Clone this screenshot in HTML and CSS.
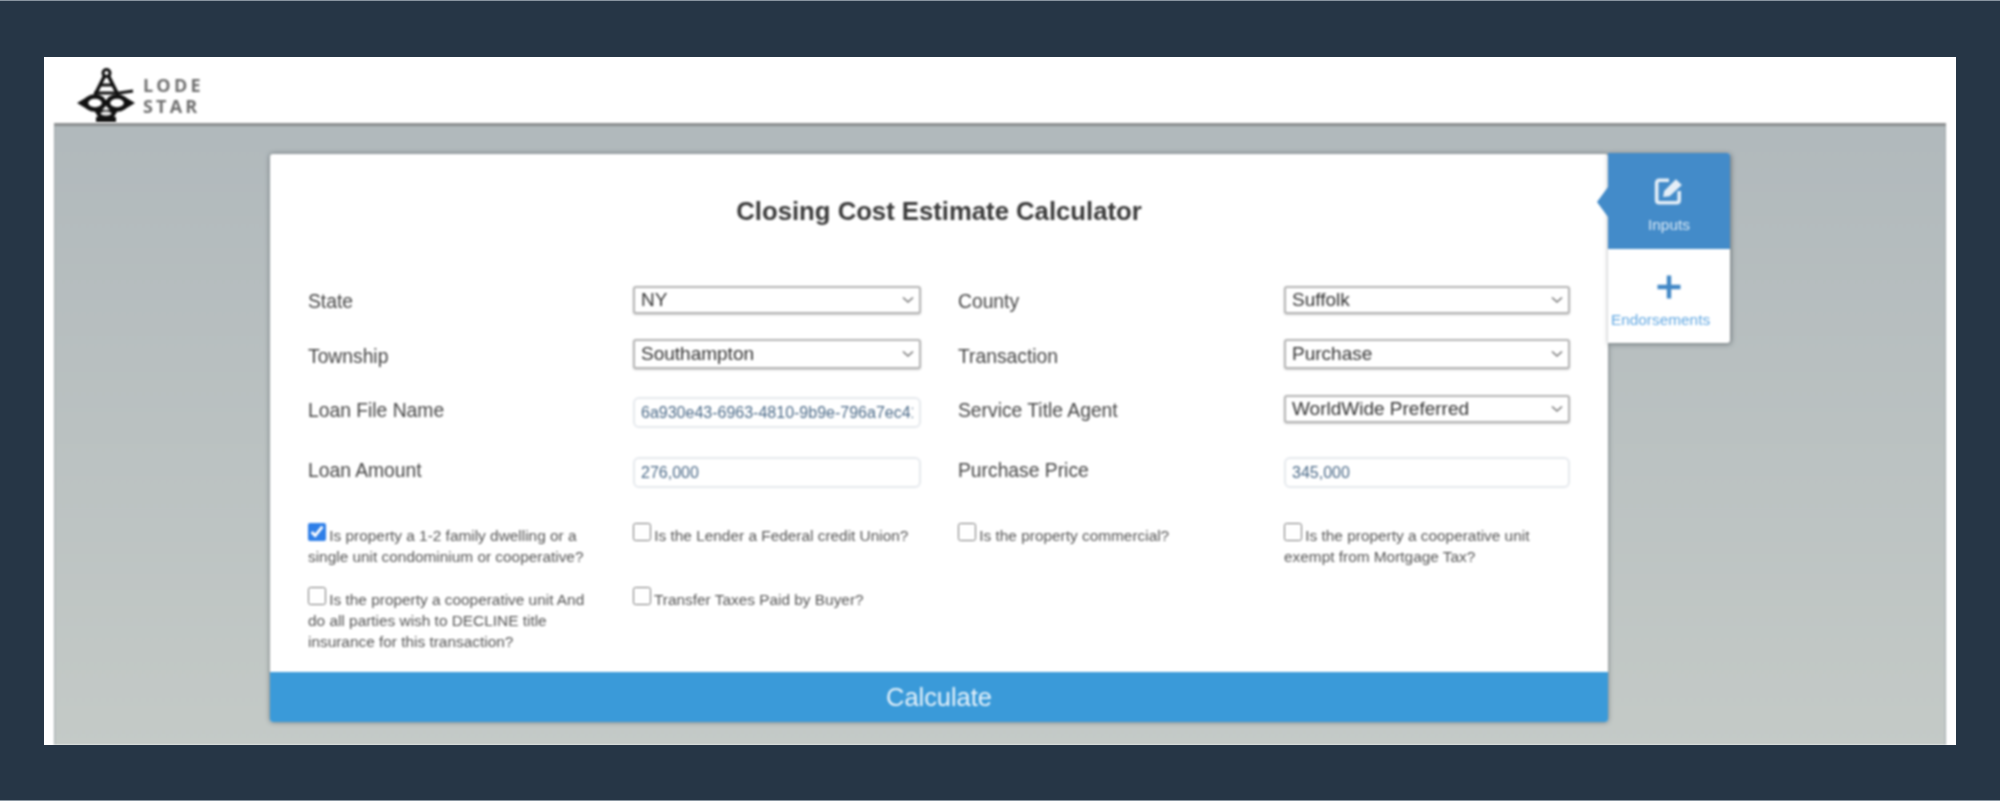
FILE: index.html
```html
<!DOCTYPE html>
<html lang="en">
<head>
<meta charset="utf-8">
<title>Closing Cost Estimate Calculator</title>
<link rel="stylesheet" href="styles.css">
</head>
<body>
<div class="frame">
  <header class="topbar">
    <svg class="logo-mark" viewBox="0 0 58 54" aria-hidden="true">
      <g fill="none" stroke="#111">
        <circle cx="29.5" cy="5" r="3.5" stroke-width="3"/>
        <path d="M27.5 8 L18 27 M31.5 8 L41 27" stroke-width="3.6"/>
        <path d="M23 17 H36 M17 25 H42 L56 23" stroke-width="2.8"/>
        <ellipse cx="18" cy="35" rx="9" ry="6.5" fill="#fff" stroke-width="4.4"/>
        <ellipse cx="40" cy="35" rx="9" ry="6.5" fill="#fff" stroke-width="4.4"/>
      </g>
      <path fill="#111" d="M0 35 L10 29 V41 Z M58 35 L48 29 V41 Z M26 32 H32 V38 H26 Z"/>
      <path fill="#111" d="M17 42 H41 L37 49 H39 V54 H19 V49 H21 Z"/>
      <ellipse cx="29" cy="45.5" rx="5.5" ry="2.2" fill="#e4e4e4"/>
    </svg>
    <div class="logo-text"><span>LODE</span><span>STAR</span></div>
  </header>
  <main class="stage">
    <section class="card">
      <h1 class="title">Closing Cost Estimate Calculator</h1>
      <form class="form">
        <label class="lbl r1">State</label>
        <div class="cell"><select class="sel"><option>NY</option></select></div>
        <label class="lbl r1">County</label>
        <div class="cell end"><select class="sel"><option>Suffolk</option></select></div>

        <label class="lbl r2">Township</label>
        <div class="cell"><select class="sel tall"><option>Southampton</option></select></div>
        <label class="lbl r2">Transaction</label>
        <div class="cell end"><select class="sel tall"><option>Purchase</option></select></div>

        <label class="lbl r3">Loan File Name</label>
        <div class="cell"><input class="inp low" type="text" value="6a930e43-6963-4810-9b9e-796a7ec41a2c"></div>
        <label class="lbl r3">Service Title Agent</label>
        <div class="cell end"><select class="sel"><option>WorldWide Preferred</option></select></div>

        <label class="lbl r4">Loan Amount</label>
        <div class="cell"><input class="inp" type="text" value="276,000"></div>
        <label class="lbl r4">Purchase Price</label>
        <div class="cell end"><input class="inp" type="text" value="345,000"></div>

        <label class="chk"><input type="checkbox" checked> Is property a 1-2 family dwelling or a single unit condominium or cooperative?</label>
        <label class="chk"><input type="checkbox"> Is the Lender a Federal credit Union?</label>
        <label class="chk"><input type="checkbox"> Is the property commercial?</label>
        <label class="chk end"><input type="checkbox"> Is the property a cooperative unit exempt from Mortgage Tax?</label>

        <label class="chk"><input type="checkbox"> Is the property a cooperative unit And do all parties wish to DECLINE title insurance for this transaction?</label>
        <label class="chk"><input type="checkbox"> Transfer Taxes Paid by Buyer?</label>
      </form>
      <button class="calc" type="button">Calculate</button>
    </section>
    <nav class="tabs">
      <div class="tab active">
        <svg class="tab-icon" viewBox="0 0 28 28" aria-hidden="true">
          <path d="M14 4 H5 Q2.5 4 2.5 6.500 V22.500 Q2.500 25 5 25 H21 Q23.500 25 23.500 22.500 V14" fill="none" stroke="#e4eef7" stroke-width="3.400"/>
          <path d="M8.500 19.500 L9.500 14 L20.500 3 L26 8.500 L14.500 19 Z" fill="#e4eef7"/>
        </svg>
        <span class="tab-label">Inputs</span>
      </div>
      <div class="tab">
        <svg class="tab-icon" viewBox="0 0 28 28" aria-hidden="true">
          <path d="M14 2.500 V25.500 M2.500 14 H25.500" fill="none" stroke="#4388c6" stroke-width="4.400"/>
        </svg>
        <span class="tab-label shifted">Endorsements</span>
      </div>
    </nav>
  </main>
</div>
</body>
</html>
```
FILE: styles.css
```css
* { box-sizing: border-box; }
html, body { margin: 0; height: 801px; overflow: hidden; }
body {
  background: #263646;
  border-top: 1px solid #8a96a1;
  border-bottom: 1px solid #8a96a1;
  font-family: "Liberation Sans", Arial, sans-serif;
  padding: 56px 44px 0;
}
.frame {
  width: 1912px;
  height: 688px;
  background: #fff;
  overflow: hidden;
}
.topbar {
  height: 66px;
  padding: 11px 0 0 33px;
  display: flex;
  gap: 8px;
  filter: blur(0.9px);
}
.logo-mark { width: 58px; height: 54px; flex: none; }
.logo-text {
  display: flex;
  flex-direction: column;
  margin-top: 7px;
  font-family: "Open Sans", sans-serif;
  font-weight: 700;
  font-size: 18px;
  line-height: 21px;
  letter-spacing: 3.2px;
  color: #6f6f6f;
}
.stage {
  margin: 0 10px;
  height: 622px;
  border-top: 3px solid #8c8f90;
  padding: 28px 0 0 216px;
  background: linear-gradient(#b1b9bc, #c4cac7);
  box-shadow: inset 1px 0 1px #a2aaad, inset -1px 0 1px #a2aaad;
  display: flex;
  align-items: flex-start;
  filter: blur(0.9px);
}
.card {
  width: 1338px;
  height: 568px;
  background: #fff;
  border-radius: 3px;
  box-shadow: 0 0 5px rgba(70, 80, 85, .7);
  display: flex;
  flex-direction: column;
}
.title {
  margin: 0;
  height: 132px;
  padding-top: 41px;
  text-align: center;
  font-size: 25.700px;
  line-height: 32px;
  font-weight: 700;
  color: #3a3a3a;
}
.form {
  flex: 1;
  display: grid;
  grid-template-columns: 325px 325px 326px 286px;
  grid-template-rows: 53px 56px 62px 66px 64px 1fr;
  padding-left: 38px;
}
.lbl {
  font-size: 19.300px;
  line-height: 24px;
  color: #444;
}
.lbl.r1 { padding-top: 4px; }
.lbl.r2 { padding-top: 6px; }
.lbl.r3 { padding-top: 4px; }
.lbl.r4 { padding-top: 2px; }
.cell { padding-right: 37px; }
.cell.end { padding-right: 0; }
.sel {
  appearance: none;
  display: block;
  width: 100%;
  height: 28px;
  border: 2px solid #b4b4b4;
  border-radius: 3px;
  padding: 0 20px 0 6px;
  font: 19px/22px "Liberation Sans", Arial, sans-serif;
  color: #333;
  background: #fff url("data:image/svg+xml,%3Csvg xmlns='http://www.w3.org/2000/svg' width='12' height='8'%3E%3Cpath d='M1 1.5 L6 6 L11 1.5' fill='none' stroke='%23777' stroke-width='1.6'/%3E%3C/svg%3E") no-repeat right 5px center;
  box-shadow: 0 1px 2px rgba(0, 0, 0, .2);
}
.sel.tall { height: 30px; }
.inp {
  display: block;
  width: 100%;
  height: 31px;
  border: 2px solid #e5e9ed;
  border-radius: 6px;
  padding: 0 6px;
  font: 16px "Liberation Sans", Arial, sans-serif;
  color: #4b6a88;
  background: #fff;
}
.inp.low { margin-top: 2px; }
.chk {
  font-size: 15.400px;
  line-height: 21px;
  color: #555;
  padding-right: 34px;
}
.chk.end { padding-right: 0; }
.chk input {
  margin: 0 -1px 0 0;
  width: 18px;
  height: 18px;
  vertical-align: 0;
  accent-color: #2f7fe8;
}
.calc {
  height: 50px;
  flex: none;
  border: 0;
  border-radius: 0 0 3px 3px;
  background: #3a9ad9;
  color: #e8f3fb;
  font: 25.400px "Liberation Sans", Arial, sans-serif;
}
.tabs {
  width: 122px;
  height: 190px;
  margin-top: -1px;
  border-radius: 0 3px 3px 0;
  box-shadow: 1px 1px 5px rgba(70, 80, 85, .7);
  background: #fff;
  display: flex;
  flex-direction: column;
}
.tab {
  height: 94px;
  display: flex;
  flex-direction: column;
  align-items: center;
  padding-top: 24px;
  font-size: 15.400px;
  line-height: 16px;
  color: #62a8e2;
}
.tab-label { margin-top: 11px; white-space: nowrap; }
.tab-label.shifted { margin-right: 17px; }
.tab-icon { width: 28px; height: 28px; flex: none; }
.tab.active {
  position: relative;
  height: 96px;
  padding-top: 23px;
  background: #438bc9;
  color: #d8e8f5;
  border-radius: 0 3px 0 0;
}
.tab.active .tab-icon { width: 30px; height: 30px; }
.tab.active .tab-label { margin-top: 11px; }
.tab.active::before {
  content: "";
  position: absolute;
  left: -11px;
  top: 34px;
  border-style: solid;
  border-width: 15px 11px 15px 0;
  border-color: transparent #438bc9 transparent transparent;
}
```
